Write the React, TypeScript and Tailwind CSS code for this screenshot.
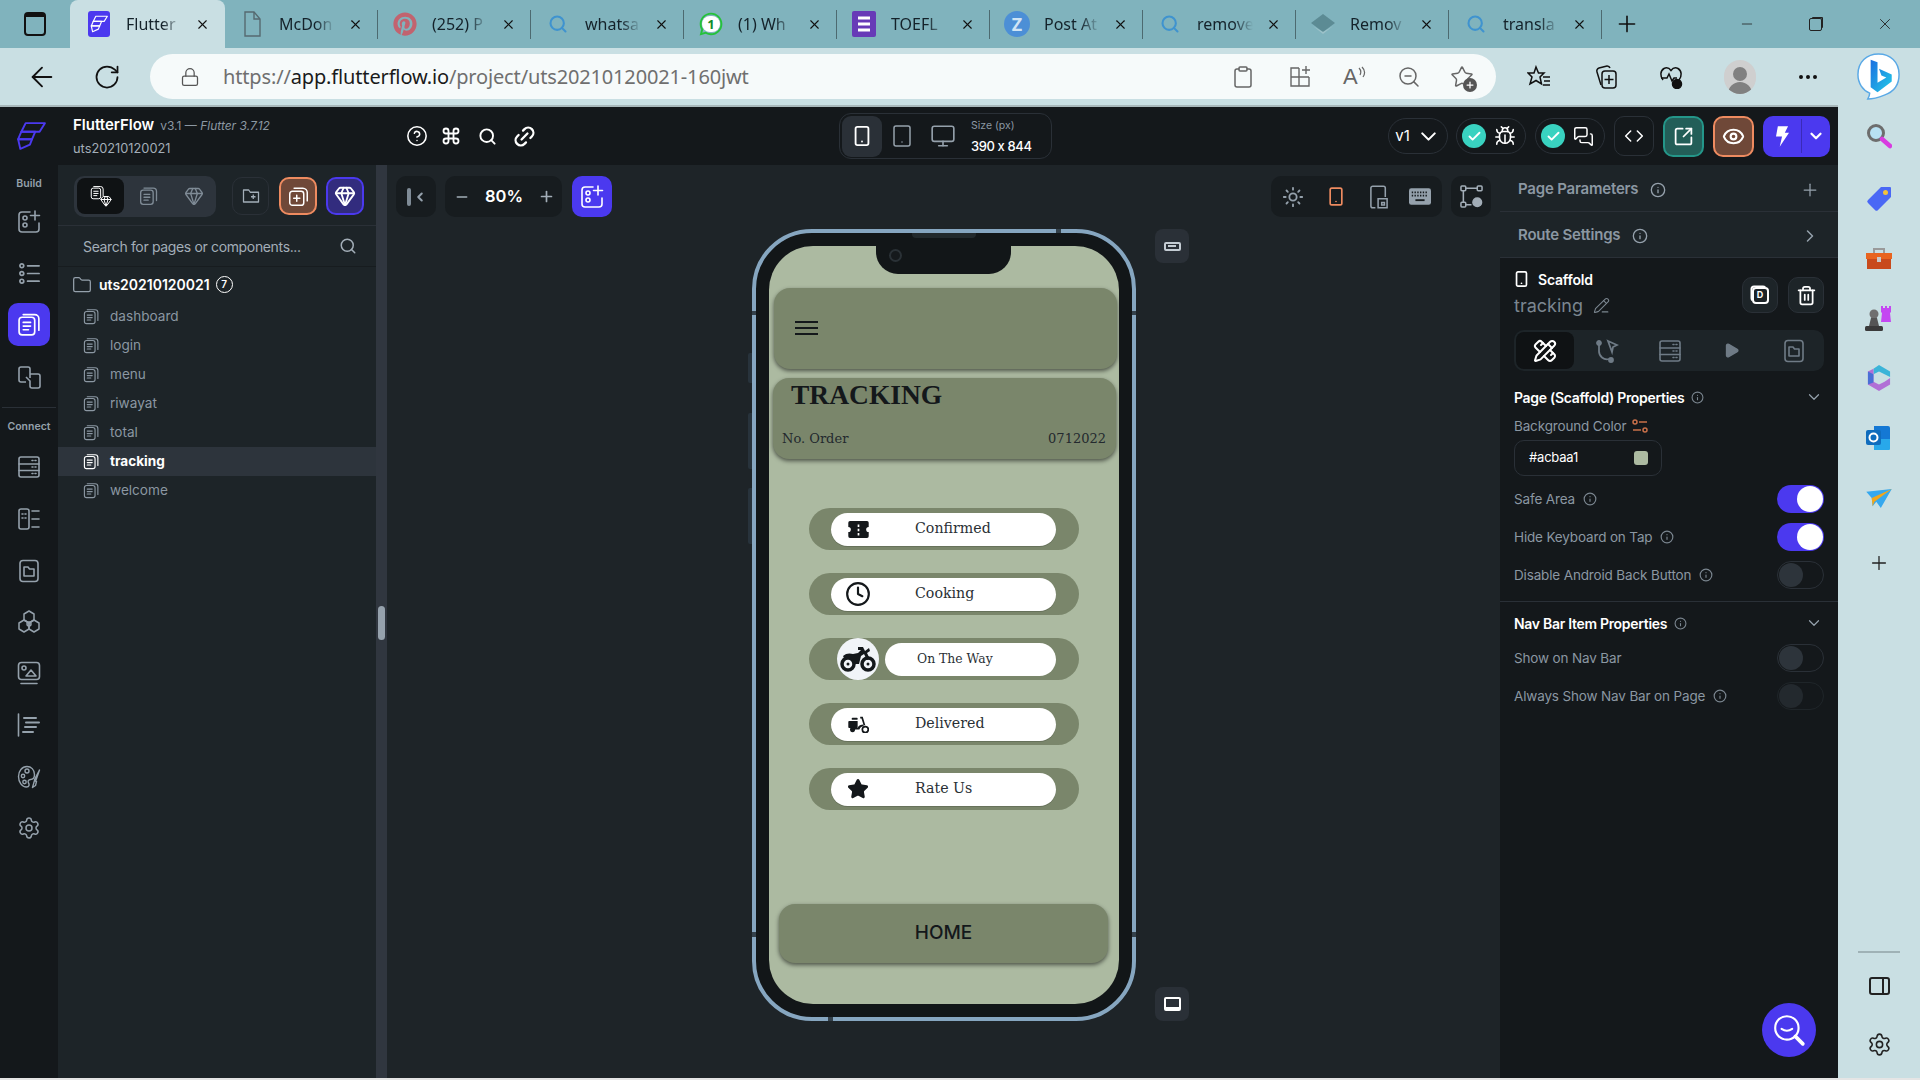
import {
  Bug,
  ChevronDown,
  ChevronRight,
  CircleHelp,
  Clock,
  Code,
  Command,
  Eye,
  Gem,
  Info,
  Link2,
  Minus,
  Monitor,
  MoreHorizontal,
  PencilLine,
  PencilRuler,
  Play,
  Plus,
  RotateCw,
  ArrowLeft,
  Search,
  Settings,
  Smartphone,
  SquareArrowOutUpRight,
  Star,
  Sun,
  Tablet,
  Trash2,
  X,
  Check,
  MessagesSquare,
  Folder,
  Lock,
  Clipboard,
  ZoomOut,
} from 'lucide-react';
import { FaPinterest, FaWhatsapp } from 'react-icons/fa';
import type { ReactNode } from 'react';

const tabs = [
  { title: 'Flutter', icon: 'ff', active: true },
  { title: 'McDon', icon: 'doc' },
  { title: '(252) P', icon: 'pin' },
  { title: 'whatsa', icon: 'search' },
  { title: '(1) Wh', icon: 'wa' },
  { title: 'TOEFL', icon: 'form' },
  { title: 'Post At', icon: 'z' },
  { title: 'remove', icon: 'search' },
  { title: 'Remov', icon: 'diamond' },
  { title: 'transla', icon: 'search' },
];

const pages = ['dashboard', 'login', 'menu', 'riwayat', 'total', 'tracking', 'welcome'];

function FlutterFlowMark({ className }: { className?: string }) {
  return (
    <svg viewBox="0 0 28 28" fill="none" stroke="currentColor" strokeWidth="1.800" strokeLinejoin="round" className={className}>
      <path d="M9 2h18l-5 8H5z" />
      <path d="M5 10h13l-3 7H2z" />
      <path d="M2 17h13l-2 5-9 4z" />
    </svg>
  );
}

function PageStack({ className }: { className?: string }) {
  return (
    <svg viewBox="0 0 24 24" fill="none" stroke="currentColor" strokeWidth="1.6" className={className}>
      <rect x="2" y="5" width="15" height="17" rx="3" />
      <path d="M6 2.500h11a4 4 0 0 1 4 4v11M6 10h7M6 13.500h7M6 17h5" strokeLinecap="round" />
    </svg>
  );
}

function AddWidget({ className }: { className?: string }) {
  return (
    <svg viewBox="0 0 24 24" fill="none" stroke="currentColor" strokeWidth="1.6" strokeLinecap="round" className={className}>
      <path d="M13 2H5a3 3 0 0 0-3 3v14a3 3 0 0 0 3 3h14a3 3 0 0 0 3-3v-6" />
      <circle cx="8" cy="8" r="2" />
      <circle cx="8" cy="15" r="2" />
      <path d="M18 1v9M13.500 5.500h9" />
    </svg>
  );
}

function TreeList({ className }: { className?: string }) {
  return (
    <svg viewBox="0 0 24 24" fill="none" stroke="currentColor" strokeWidth="1.8" strokeLinecap="round" className={className}>
      <circle cx="4" cy="4" r="2" />
      <circle cx="4" cy="12" r="2" />
      <circle cx="4" cy="20" r="2" />
      <path d="M10 4h12M10 12h12M10 20h12" />
    </svg>
  );
}

function Swap({ className }: { className?: string }) {
  return (
    <svg viewBox="0 0 24 24" fill="none" stroke="currentColor" strokeWidth="1.6" className={className}>
      <path d="M13 13V4a2 2 0 0 0-2-2H4a2 2 0 0 0-2 2v11a2 2 0 0 0 2 2h5" />
      <path d="M13 9h8a2 2 0 0 1 2 2v10a2 2 0 0 1-2 2h-6a2 2 0 0 1-2-2v-5L9 12" />
    </svg>
  );
}

function Server({ className }: { className?: string }) {
  return (
    <svg viewBox="0 0 24 24" fill="none" stroke="currentColor" strokeWidth="1.6" strokeLinecap="round" className={className}>
      <rect x="2" y="2" width="20" height="20" rx="2" />
      <path d="M2 9h20M2 15.500h20M15 5.500h1M18 5.500h1M15 12h1M18 12h1M15 18.500h1M18 18.500h1" />
    </svg>
  );
}

function TableList({ className }: { className?: string }) {
  return (
    <svg viewBox="0 0 24 24" fill="none" stroke="currentColor" strokeWidth="1.6" strokeLinecap="round" className={className}>
      <rect x="2" y="2" width="10" height="20" rx="2" />
      <path d="M5 7h1M8 7h1M5 11h1M8 11h1M15 4h7M15 12h7M15 20h7" />
    </svg>
  );
}

function PhoneFolder({ className }: { className?: string }) {
  return (
    <svg viewBox="0 0 24 24" fill="none" stroke="currentColor" strokeWidth="1.6" strokeLinejoin="round" className={className}>
      <rect x="3" y="1.500" width="18" height="21" rx="3" />
      <path d="M7 8h4l1.500 2H17v7H7z" />
    </svg>
  );
}

function Cluster({ className }: { className?: string }) {
  return (
    <svg viewBox="0 0 24 24" fill="none" stroke="currentColor" strokeWidth="1.5" strokeLinejoin="round" className={className}>
      <path d="M12 1l5 3v6l-5 3-5-3V4z" />
      <path d="M7 10l5 3v6l-5 3-5-3v-6z" />
      <path d="M17 10l5 3v6l-5 3-5-3v-6z" />
      <circle cx="12" cy="14" r="2" />
    </svg>
  );
}

function ImageTray({ className }: { className?: string }) {
  return (
    <svg viewBox="0 0 24 24" fill="none" stroke="currentColor" strokeWidth="1.6" strokeLinejoin="round" className={className}>
      <rect x="1.500" y="1.500" width="21" height="17" rx="3" />
      <circle cx="7" cy="7" r="2" />
      <path d="M9 15l5-6 5 6zM4 22.500h16" strokeLinecap="round" />
    </svg>
  );
}

function StoryList({ className }: { className?: string }) {
  return (
    <svg viewBox="0 0 24 24" fill="none" stroke="currentColor" strokeWidth="1.6" strokeLinecap="round" className={className}>
      <path d="M1.500 1v22" />
      <path d="M7 5h12M9 9.500h13M8 14h11M6 19h10" strokeWidth="2" />
    </svg>
  );
}

function Palette({ className }: { className?: string }) {
  return (
    <svg viewBox="0 0 24 24" fill="none" stroke="currentColor" strokeWidth="1.4" strokeLinejoin="round" className={className}>
      <path d="M10 1.500C5 1.500 1.500 6 1.500 11.500S5 22 9.500 22c3 0 3-2.500 2-4s0-3.500 2-3.500c2.500 0 4-1.500 4-5 0-5-3.500-8-7.500-8z" />
      <circle cx="10" cy="6" r="2" />
      <circle cx="6" cy="11" r="1.700" />
      <circle cx="7.500" cy="17" r="1.700" />
      <path d="M22.500 5l-3.500 10-1.500-.5zM17.500 15.500l2 1-1 4-3 2z" />
    </svg>
  );
}

function FolderPlus({ className }: { className?: string }) {
  return (
    <svg viewBox="0 0 24 24" fill="none" stroke="currentColor" strokeWidth="1.7" strokeLinejoin="round" className={className}>
      <path d="M2 4h7l2 3h11v13H2z" />
      <path d="M15 10v6M12 13h6" />
    </svg>
  );
}

function PagePlus({ className }: { className?: string }) {
  return (
    <svg viewBox="0 0 24 24" fill="none" stroke="currentColor" strokeWidth="1.7" strokeLinecap="round" className={className}>
      <rect x="2" y="6" width="16" height="16" rx="3" />
      <path d="M7 2.500h10a5 5 0 0 1 5 5V17M10 10.500v7M6.500 14h7" />
    </svg>
  );
}

function Flow({ className }: { className?: string }) {
  return (
    <svg viewBox="0 0 24 24" fill="none" stroke="currentColor" strokeWidth="1.6" className={className}>
      <rect x="1" y="1" width="5" height="5" rx="1" />
      <rect x="18" y="1" width="5" height="5" rx="1" />
      <rect x="1" y="18" width="5" height="5" rx="1" />
      <path d="M6 3.500h12M3.500 6v12M6 20.500h6" />
      <circle cx="18" cy="18" r="4.500" fill="currentColor" />
    </svg>
  );
}

function TabletSplit({ className }: { className?: string }) {
  return (
    <svg viewBox="0 0 20 26" fill="none" stroke="currentColor" strokeWidth="1.700" className={className}>
      <path d="M6 25H3a2 2 0 0 1-2-2V3a2 2 0 0 1 2-2h12a2 2 0 0 1 2 2v10" />
      <path d="M9 15h10v10H9zM13 19h3v3h-3z" />
    </svg>
  );
}

function KeyboardSolid({ className }: { className?: string }) {
  return (
    <svg viewBox="0 0 24 18" className={className}>
      <rect width="24" height="18" rx="2.500" fill="currentColor" />
      <path d="M3 4.500h18M3 8h18" stroke="#171c1f" strokeWidth="1.800" strokeDasharray="1.500 1.500" />
      <path d="M7 13h10" stroke="#171c1f" strokeWidth="2" />
    </svg>
  );
}

function Bolt({ className }: { className?: string }) {
  return (
    <svg viewBox="0 0 14 22" fill="white" className={className}>
      <path d="M2 0h11L9.500 7H14L4 22l2.500-11H0z" />
    </svg>
  );
}

function Ticket({ className }: { className?: string }) {
  return (
    <svg viewBox="0 0 24 20" className={className}>
      <path
        fill="currentColor"
        fillRule="evenodd"
        d="M2 0h20a2 2 0 0 1 2 2v5a3 3 0 0 0 0 6v5a2 2 0 0 1-2 2H2a2 2 0 0 1-2-2v-5a3 3 0 0 0 0-6V2a2 2 0 0 1 2-2zm9 4v3h2V4zm0 5v3h2V9zm0 5v3h2v-3z"
      />
    </svg>
  );
}

function Scooter({ className }: { className?: string }) {
  return (
    <svg viewBox="0 0 24 20" fill="currentColor" className={className}>
      <rect x="4" y="2" width="7" height="2.500" rx="1" />
      <path d="M1 6h10v8H1a1 1 0 0 1-1-1V7a1 1 0 0 1 1-1z" />
      <path d="M14 1h3l3 10h-2L15.500 3H14z" />
      <path d="M11 14c1-3 4-4 7-4v2c-2 0-4 1-5 4H5v-2z" />
      <circle cx="5" cy="16" r="3" />
      <circle cx="20" cy="16" r="3.500" fill="none" stroke="currentColor" strokeWidth="2" />
    </svg>
  );
}

function Motorbike({ className }: { className?: string }) {
  return (
    <svg viewBox="0 0 36 26" className={className}>
      <g fill="none" stroke="#14181b" strokeWidth="3.500">
        <circle cx="8" cy="18" r="6" />
        <circle cx="28" cy="18" r="6" />
      </g>
      <circle cx="8" cy="18" r="1.500" fill="#14181b" />
      <circle cx="28" cy="18" r="1.500" fill="#14181b" />
      <path fill="#14181b" d="M3 10c3-3 7-3 10-2l5-1 3-3h-3V1h5l2 4 4-3 1 3-3 2 3 6-3 1-3-6-3 2-2 8h-6c0-4-4-7-9-6z" />
    </svg>
  );
}

function TabIcon({ kind }: { kind: string }) {
  if (kind === 'ff')
    return (
      <div className="flex h-[26px] w-[22px] items-center justify-center rounded-[3px] bg-[#4b39ef] text-white">
        <FlutterFlowMark className="h-[20px] w-[18px]" />
      </div>
    );
  if (kind === 'doc')
    return (
      <svg viewBox="0 0 20 26" fill="none" stroke="#566a70" strokeWidth="1.400" className="h-[26px] w-[20px]">
        <path d="M3 1h9l6 7v17H3z" />
        <path d="M12 1v7h6" />
      </svg>
    );
  if (kind === 'pin') return <FaPinterest className="h-[24px] w-[24px] text-[#c2636f]" />;
  if (kind === 'wa')
    return (
      <div className="relative flex h-[26px] w-[24px] items-center justify-center">
        <FaWhatsapp className="h-[26px] w-[24px] text-[#25c23a]" />
        <span className="absolute inset-0 flex items-center justify-center font-['Noto_Sans',sans-serif] text-[13px] font-bold text-[#128c2a]">
          <span className="rounded-full bg-white px-[5px] leading-[16px]">1</span>
        </span>
      </div>
    );
  if (kind === 'form')
    return (
      <svg viewBox="0 0 24 26" className="h-[26px] w-[24px]">
        <rect width="24" height="26" rx="2" fill="#673ab7" />
        <path d="M6 7h12M6 13h12M6 19h12" stroke="#fff" strokeWidth="3" />
      </svg>
    );
  if (kind === 'z')
    return (
      <div className="flex h-[26px] w-[26px] items-center justify-center rounded-full bg-[#4c8fd6] font-['Noto_Sans',sans-serif] text-[18px] font-bold text-[#cfe4f5]">
        Z
      </div>
    );
  if (kind === 'diamond')
    return (
      <svg viewBox="0 0 26 20" className="h-[20px] w-[26px]">
        <path d="M13 0l12 9-12 9L1 9z" fill="#5c8b94" />
        <path d="M3 12l10 8 10-8-10 6z" fill="#9dc2c9" />
      </svg>
    );
  return <Search className="h-[20px] w-[20px] text-[#3f93cf]" strokeWidth={2.500} />;
}

function Tab({ title, icon, active }: { title: string; icon: string; active?: boolean }) {
  return active ? (
    <div className="flex h-12 w-[155px] items-center rounded-t-[8px] bg-[#c9dfe3]">
      <div className="ml-[18px] flex w-[22px] justify-center">
        <TabIcon kind={icon} />
      </div>
      <span className="ml-[16px] w-[56px] text-[16px] whitespace-nowrap text-[#14222a] [mask-image:linear-gradient(90deg,black_65%,transparent)]">
        {title}
      </span>
      <X className="ml-[13px] h-[15px] w-[15px] text-[#111]" strokeWidth={1.800} />
    </div>
  ) : (
    <div className="flex h-12 w-[153px] items-center">
      <div className="ml-[12px] flex w-[30px] justify-center">
        <TabIcon kind={icon} />
      </div>
      <span className="ml-[12px] w-[56px] text-[16px] whitespace-nowrap text-[#14222a] [mask-image:linear-gradient(90deg,black_65%,transparent)]">
        {title}
      </span>
      <X className="ml-[13px] h-[15px] w-[15px] text-[#111]" strokeWidth={1.800} />
      <div className="ml-auto h-[29px] w-px bg-[#4d6a70]" />
    </div>
  );
}

function BingLogo() {
  return (
    <svg viewBox="0 0 44 48" className="h-[47px] w-[45px]">
      <defs>
        <linearGradient id="bingGrad" x1="0" y1="0" x2="1" y2="1">
          <stop offset="0" stopColor="#1b6fe0" />
          <stop offset="1" stopColor="#22cbe8" />
        </linearGradient>
      </defs>
      <path
        d="M22 1c12 0 21 8 21 21 0 11-6 18-15 21-5 2-12 4-17 4 1-2 2-4 2-6C6 38 1 31 1 22 1 9 10 1 22 1z"
        fill="#fff"
        stroke="#5aa9e6"
        strokeWidth="1.500"
      />
      <path d="M14 7l7 2.500v21l9-5.500-5-2-2.500-7 13 6v7L21 40l-7-5z" fill="url(#bingGrad)" />
    </svg>
  );
}

function RailIcon({ className, children }: { className: string; children: ReactNode }) {
  return <div className={`flex h-[28px] items-center justify-center text-[#95a1ac] ${className}`}>{children}</div>;
}

function Toggle({ on, dim }: { on?: boolean; dim?: boolean }) {
  if (on)
    return (
      <div className="flex h-[28px] w-[47px] items-center justify-end rounded-full bg-[#4b39ef] pr-[1px]">
        <div className="h-[26px] w-[26px] rounded-full bg-white" />
      </div>
    );
  return (
    <div className={`flex h-[28px] w-[47px] items-center rounded-full border ${dim ? 'border-[#1f2529]' : 'border-[#2a3037]'} pl-[1px]`}>
      <div className={`h-[24px] w-[24px] rounded-full ${dim ? 'bg-[#23292e]' : 'bg-[#2d343b]'}`} />
    </div>
  );
}

function PropRow({ label, className, children }: { label: string; className: string; children: ReactNode }) {
  return (
    <div className={`flex h-[28px] items-center ${className}`}>
      <span className="text-[13.5px] tracking-[-0.15px] text-[#8b97a2]">{label}</span>
      <Info className="ml-[8px] h-[14px] w-[14px] text-[#7b8690]" />
      <div className="ml-auto">{children}</div>
    </div>
  );
}

function StatusRow({ icon, label }: { icon: ReactNode; label: string }) {
  return (
    <div className="ml-[40px] flex h-[42px] w-[270px] items-center rounded-[21px] bg-[#7a866b] pl-[22px]">
      <div className="flex h-[33px] w-[225px] items-center rounded-[17px] bg-white text-[#14181b] shadow-[0_1px_0_rgba(0,0,0,0.15)]">
        <div className="flex w-[54px] justify-center">{icon}</div>
        <span className="ml-[30px] text-[14.2px] text-[#2a3035]">{label}</span>
      </div>
    </div>
  );
}

function SideColorIcon({ children, className }: { children: ReactNode; className: string }) {
  return <div className={`flex h-[26px] w-full items-center justify-center ${className}`}>{children}</div>;
}

export default function App() {
  return (
    <div className="flex h-[1080px] w-[1920px] flex-col overflow-hidden bg-[#e5e5e5] font-[Inter,sans-serif]">
      {/* tab strip */}
      <div className="flex h-12 shrink-0 bg-[#80b3bd] font-['Noto_Sans',sans-serif]">
        <div className="flex w-[70px] items-center justify-center">
          <div className="h-[24px] w-[22px] rounded-[4px] border-2 border-t-[5px] border-[#111]" />
        </div>
        {tabs.map((tab, i) => (
          <Tab key={i} title={tab.title} icon={tab.icon} active={tab.active} />
        ))}
        <div className="flex w-[50px] items-center justify-center">
          <Plus className="h-[26px] w-[26px] text-[#111]" strokeWidth={1.500} />
        </div>
        <div className="ml-auto flex">
          <div className="flex w-[69px] items-center justify-center">
            <Minus className="h-[16px] w-[16px] text-[#222]" strokeWidth={1.200} />
          </div>
          <div className="flex w-[69px] items-center justify-center">
            <div className="h-[13px] w-[13px] rounded-[2px] border border-[#222] shadow-[2px_-2px_0_-1px_#222]" />
          </div>
          <div className="flex w-[70px] items-center justify-center">
            <X className="h-[18px] w-[18px] text-[#222]" strokeWidth={1.200} />
          </div>
        </div>
      </div>

      {/* address bar */}
      <div className="flex h-[57px] shrink-0 items-center bg-[#c9dfe3] pl-[26px]">
        <ArrowLeft className="h-[32px] w-[32px] text-[#111]" strokeWidth={1.400} />
        <RotateCw className="ml-[35px] h-[28px] w-[28px] text-[#111]" strokeWidth={1.500} />
        <div className="ml-[29px] flex h-[45px] w-[1346px] items-center rounded-full bg-[#f6fafa] pl-[30px] font-['Noto_Sans',sans-serif]">
          <Lock className="h-[22px] w-[20px] text-[#555]" strokeWidth={1.500} />
          <span className="ml-[23px] text-[20px] tracking-[-0.15px] whitespace-nowrap text-[#6f6f6f]">
            https://<span className="text-[#1a1a1a]">app.flutterflow.io</span>/project/uts20210120021-160jwt
          </span>
          <div className="ml-auto flex items-center pr-[22px] text-[#666]">
            <Clipboard className="h-[24px] w-[24px]" strokeWidth={1.500} />
            <svg viewBox="0 0 24 24" fill="none" stroke="currentColor" strokeWidth="1.400" className="ml-[33px] h-[24px] w-[24px]">
              <path d="M11 3H3v18h18v-9M3 12h18M11 3v18M18 1v8M14 5h8" />
            </svg>
            <div className="ml-[31px] flex h-[24px] w-[24px] items-center">
              <span className="font-['Liberation_Sans',sans-serif] text-[22px] leading-none">A</span>
              <svg viewBox="0 0 8 14" fill="none" stroke="currentColor" strokeWidth="1.200" className="mb-[8px] h-[14px] w-[8px]">
                <path d="M1 2c2 2 2 5 1 7M4 1c3 3 3 7 1 10" />
              </svg>
            </div>
            <ZoomOut className="ml-[30px] h-[24px] w-[24px]" strokeWidth={1.500} />
            <div className="relative ml-[29px] h-[24px] w-[24px]">
              <Star className="h-[24px] w-[24px]" strokeWidth={1.500} />
              <div className="absolute right-[-3px] bottom-[-3px] flex h-[14px] w-[14px] items-center justify-center rounded-full bg-[#555] text-white">
                <Plus className="h-[10px] w-[10px]" strokeWidth={3} />
              </div>
            </div>
          </div>
        </div>
        <svg viewBox="0 0 24 24" fill="none" stroke="#111" strokeWidth="1.500" className="ml-[31px] h-[24px] w-[24px]">
          <path d="M9 2l2.500 6H17l-4 4 1.500 7-5.500-3.500L3 19l2-7-4-4h6z" />
          <path d="M16 12h7M17 16h6M16 20h7" />
        </svg>
        <svg viewBox="0 0 24 24" fill="none" stroke="#111" strokeWidth="1.500" className="ml-[43px] h-[24px] w-[24px]">
          <path d="M7 20L3 7a3 3 0 0 1 2-4l8-2a3 3 0 0 1 3 2" />
          <rect x="8" y="6" width="14" height="17" rx="3" />
          <path d="M15 10v9M10.500 14.500h9" />
        </svg>
        <svg viewBox="0 0 24 24" fill="none" stroke="#111" strokeWidth="1.500" className="ml-[41px] h-[24px] w-[24px]">
          <path d="M4 15C1 11 1 6 5 3.500c3-1.500 5.500 0 7 2 1.500-2 4-3.500 7-2 4 2.500 4 7.500 1 11.500" />
          <path d="M2 13h6l2-4 3 7 2-3h3" />
          <circle cx="18" cy="19" r="4.500" fill="#111" />
        </svg>
        <div className="ml-[41px] flex h-[34px] w-[32px] items-end justify-center overflow-hidden rounded-full bg-[#cfcfcf]">
          <div className="flex flex-col items-center">
            <div className="h-[14px] w-[14px] rounded-full bg-[#808080]" />
            <div className="mt-[1px] h-[12px] w-[24px] rounded-t-full bg-[#808080]" />
          </div>
        </div>
        <MoreHorizontal className="ml-[40px] h-[24px] w-[24px] text-[#111]" />
        <div className="ml-[36px] flex w-[45px]">
          <BingLogo />
        </div>
      </div>

      <div className="flex min-h-0 flex-1">
        {/* app */}
        <div className="flex w-[1838px] flex-col border-t-2 border-[#a8b8bb] bg-[#14181b] text-white">
          {/* header */}
          <div className="flex h-[58px] shrink-0 items-center">
            <div className="flex w-[60px] justify-center pl-[1px] text-[#4b39ef]">
              <FlutterFlowMark className="h-[32px] w-[30px]" />
            </div>
            <div className="ml-[13px] flex w-[314px] flex-col">
              <div className="flex items-baseline">
                <span className="text-[15px] font-semibold">FlutterFlow</span>
                <span className="ml-[6px] text-[12px] text-[#8b97a2]">
                  v3.1 — <span className="italic">Flutter 3.7.12</span>
                </span>
              </div>
              <span className="mt-[2px] text-[12.8px] text-[#a3aeb8]">uts20210120021</span>
            </div>
            <div className="flex items-center text-white">
              <CircleHelp className="ml-[19px] h-[22px] w-[22px]" strokeWidth={1.700} />
              <Command className="ml-[13px] h-[20px] w-[20px]" strokeWidth={2.200} />
              <Search className="ml-[17px] h-[19px] w-[19px]" strokeWidth={2.400} />
              <Link2 className="ml-[15px] h-[25px] w-[25px] -rotate-45" strokeWidth={2.200} />
            </div>
            <div className="ml-[302px] flex h-[46px] w-[213px] items-center rounded-[12px] border border-[#2a3037] pl-[2px]">
              <div className="flex h-[41px] w-[40px] items-center justify-center rounded-[9px] bg-[#2a3037]">
                <Smartphone className="h-[22px] w-[22px] text-white" strokeWidth={2} />
              </div>
              <Tablet className="ml-[8px] h-[24px] w-[24px] text-[#95a1ac]" strokeWidth={1.500} />
              <Monitor className="ml-[16px] h-[26px] w-[26px] text-[#95a1ac]" strokeWidth={1.500} />
              <div className="ml-[15px] flex flex-col">
                <span className="text-[10.500px] leading-[14px] text-[#8b97a2]">Size (px)</span>
                <span className="mt-[5px] text-[13px] leading-[16px] font-medium tracking-[-0.4px]">390 x 844</span>
              </div>
            </div>
            <div className="ml-[336px] flex h-[36px] w-[60px] items-center justify-center gap-[6px] rounded-full border border-[#2a3037] text-[15px]">
              v1
              <ChevronDown className="h-[25px] w-[25px]" strokeWidth={2} />
            </div>
            <div className="ml-[8px] flex h-[36px] w-[70px] items-center rounded-full border border-[#2a3037] pl-[5px]">
              <div className="flex h-[24px] w-[24px] items-center justify-center rounded-full bg-[#39d2c0]">
                <Check className="h-[15px] w-[15px] text-white" strokeWidth={3} />
              </div>
              <Bug className="ml-[8px] h-[22px] w-[22px]" strokeWidth={1.700} />
            </div>
            <div className="ml-[9px] flex h-[36px] w-[70px] items-center rounded-full border border-[#2a3037] pl-[5px]">
              <div className="flex h-[24px] w-[24px] items-center justify-center rounded-full bg-[#39d2c0]">
                <Check className="h-[15px] w-[15px] text-white" strokeWidth={3} />
              </div>
              <MessagesSquare className="ml-[8px] h-[21px] w-[21px]" strokeWidth={1.700} />
            </div>
            <div className="ml-[9px] flex h-[40px] w-[40px] items-center justify-center rounded-[10px] border border-[#2a3037]">
              <Code className="h-[20px] w-[20px]" strokeWidth={1.800} />
            </div>
            <div className="ml-[9px] flex h-[41px] w-[41px] items-center justify-center rounded-[10px] border-2 border-[#249689] bg-[#235e58]">
              <SquareArrowOutUpRight className="h-[21px] w-[21px]" strokeWidth={2} />
            </div>
            <div className="ml-[9px] flex h-[41px] w-[41px] items-center justify-center rounded-[10px] border-2 border-[#ee8b60] bg-[#6f4838]">
              <Eye className="h-[23px] w-[23px]" strokeWidth={2.200} />
            </div>
            <div className="ml-[9px] flex h-[41px] w-[67px] items-center rounded-[10px] bg-[#4b39ef]">
              <div className="flex h-[34px] w-[39px] items-center justify-center border-r border-[#3a2ab8]">
                <Bolt className="h-[21px] w-[13px]" />
              </div>
              <ChevronDown className="ml-[5px] h-[18px] w-[18px]" strokeWidth={3} />
            </div>
          </div>

          <div className="flex min-h-0 flex-1">
            {/* rail */}
            <div className="flex w-[58px] shrink-0 flex-col items-center">
              <span className="mt-[12px] h-[14px] text-[10.500px] leading-[14px] font-semibold text-[#95a1ac]">Build</span>
              <RailIcon className="mt-[17px]">
                <AddWidget className="h-[24px] w-[24px]" />
              </RailIcon>
              <RailIcon className="mt-[23px]">
                <TreeList className="h-[23px] w-[23px]" />
              </RailIcon>
              <div className="mt-[16px] flex h-[43px] w-[42px] items-center justify-center rounded-[10px] bg-[#4b39ef] text-white">
                <PageStack className="h-[25px] w-[25px]" />
              </div>
              <RailIcon className="mt-[17px]">
                <Swap className="h-[24px] w-[24px]" />
              </RailIcon>
              <div className="mt-[16px] h-px w-[54px] bg-[#2a3037]" />
              <span className="mt-[12px] h-[14px] text-[10.500px] leading-[14px] font-semibold text-[#95a1ac]">Connect</span>
              <RailIcon className="mt-[19px]">
                <Server className="h-[24px] w-[24px]" />
              </RailIcon>
              <RailIcon className="mt-[24px]">
                <TableList className="h-[24px] w-[24px]" />
              </RailIcon>
              <RailIcon className="mt-[24px]">
                <PhoneFolder className="h-[24px] w-[24px]" />
              </RailIcon>
              <RailIcon className="mt-[23px]">
                <Cluster className="h-[24px] w-[24px]" />
              </RailIcon>
              <RailIcon className="mt-[23px]">
                <ImageTray className="h-[24px] w-[24px]" />
              </RailIcon>
              <RailIcon className="mt-[24px]">
                <StoryList className="h-[24px] w-[24px]" />
              </RailIcon>
              <RailIcon className="mt-[24px]">
                <Palette className="h-[24px] w-[24px]" />
              </RailIcon>
              <RailIcon className="mt-[23px]">
                <Settings className="h-[24px] w-[24px]" strokeWidth={1.500} />
              </RailIcon>
            </div>

            {/* page list */}
            <div className="flex w-[318px] shrink-0 flex-col bg-[#1d2428]">
              <div className="flex h-[61px] shrink-0 items-center border-b border-[#2a3037] pt-[2px] pl-[16px]">
                <div className="flex h-[41px] w-[142px] items-center rounded-[10px] bg-[#2d343c] pl-[3px] text-[#7f8b96]">
                  <div className="flex h-[36px] w-[47px] items-center justify-center rounded-[8px] bg-[#0f1214] text-white">
                    <div className="relative h-[22px] w-[22px]">
                      <PageStack className="h-[15px] w-[15px]" />
                      <Gem className="absolute right-0 bottom-0 h-[12px] w-[12px]" strokeWidth={2} />
                    </div>
                  </div>
                  <PageStack className="ml-[15px] h-[20px] w-[20px]" />
                  <Gem className="ml-[25px] h-[20px] w-[20px]" strokeWidth={1.600} />
                </div>
                <div className="ml-[16px] flex h-[38px] w-[37px] items-center justify-center rounded-[10px] border border-[#2a3037] text-[#a3aeb8]">
                  <FolderPlus className="h-[18px] w-[18px]" />
                </div>
                <div className="ml-[10px] flex h-[38px] w-[38px] items-center justify-center rounded-[10px] border-2 border-[#ee8b60] bg-[#6f4838]">
                  <PagePlus className="h-[21px] w-[21px]" />
                </div>
                <div className="ml-[9px] flex h-[38px] w-[38px] items-center justify-center rounded-[10px] border-2 border-[#4b39ef] bg-[#322c7e]">
                  <Gem className="h-[22px] w-[22px]" strokeWidth={2} />
                </div>
              </div>
              <div className="flex h-[41px] shrink-0 items-center border-b border-[#171c1f] pl-[25px]">
                <span className="text-[14px] tracking-[-0.35px] text-[#a3aeb8]">Search for pages or components...</span>
                <Search className="mr-[19px] ml-auto h-[18px] w-[18px] text-[#a3aeb8]" strokeWidth={2} />
              </div>
              <div className="mt-[2px] flex h-[33px] shrink-0 items-center pb-[2px] pl-[14px]">
                <Folder className="h-[20px] w-[20px] text-[#95a1ac]" strokeWidth={1.500} />
                <span className="ml-[7px] text-[14px] font-semibold">uts20210120021</span>
                <span className="ml-[6px] flex h-[17px] w-[17px] items-center justify-center rounded-full border border-white text-[10px] font-semibold">7</span>
              </div>
              {pages.map((page) =>
                page === 'tracking' ? (
                  <div key={page} className="flex h-[29px] shrink-0 items-center bg-[#2d343c] pl-[25px]">
                    <PageStack className="h-[17px] w-[17px] text-white" />
                    <span className="ml-[10px] text-[13.6px] font-bold text-white">{page}</span>
                  </div>
                ) : (
                  <div key={page} className="flex h-[29px] shrink-0 items-center pl-[25px]">
                    <PageStack className="h-[17px] w-[17px] text-[#8b97a2]" />
                    <span className="ml-[10px] text-[13.6px] text-[#8b97a2]">{page}</span>
                  </div>
                ),
              )}
            </div>
            <div className="w-[11px] shrink-0 bg-[#30363f] px-[2px] pt-[441px]">
              <div className="h-[34px] w-[7px] rounded-full bg-[#95a1ac]" />
            </div>

            {/* canvas */}
            <div className="flex w-[1113px] shrink-0 flex-col bg-[#1e2428]">
              <div className="mt-[11px] flex h-[41px] shrink-0 pl-[9px]">
                <div className="flex w-[40px] items-center justify-center gap-[2px] rounded-[10px] bg-[#171c1f] pl-[2px] text-[#95a1ac]">
                  <div className="h-[18px] w-[4px] rounded-full bg-[#7f8b96]" />
                  <ChevronRight className="h-[14px] w-[14px] rotate-180" strokeWidth={3.500} />
                </div>
                <div className="ml-[9px] flex w-[117px] items-center justify-between rounded-[10px] bg-[#171c1f] pr-[7px] pl-[9px]">
                  <Minus className="h-[16px] w-[16px] text-[#a3aeb8]" strokeWidth={2.400} />
                  <span className="text-[16.500px] font-semibold">80%</span>
                  <Plus className="h-[17px] w-[17px] text-[#a3aeb8]" strokeWidth={2.400} />
                </div>
                <div className="ml-[10px] flex w-[40px] items-center justify-center rounded-[10px] bg-[#4b39ef]">
                  <AddWidget className="h-[24px] w-[24px]" />
                </div>
                <div className="ml-[659px] flex w-[171px] items-center rounded-[10px] bg-[#171c1f] pl-[11px] text-[#95a1ac]">
                  <Sun className="h-[22px] w-[22px]" strokeWidth={2} />
                  <Smartphone className="ml-[22px] h-[27px] w-[20px] text-[#ee8b60]" strokeWidth={2} />
                  <TabletSplit className="ml-[24px] h-[24px] w-[18px]" />
                  <KeyboardSolid className="ml-[21px] h-[17px] w-[22px]" />
                </div>
                <div className="ml-[9px] flex w-[40px] items-center justify-center rounded-[10px] bg-[#171c1f] text-[#a3aeb8]">
                  <Flow className="h-[23px] w-[23px]" />
                </div>
              </div>

              <div className="mt-[12px] flex pl-[365px]">
                {/* phone */}
                <div className="relative h-[792px] w-[384px] shrink-0 rounded-[60px] border-[4px] border-[#86a6c0] bg-[#121618] p-[13px]">
                  <div className="absolute top-[120px] -left-[8px] h-[30px] w-[4px] rounded-l-[2px] bg-[#28333c]" />
                  <div className="absolute top-[180px] -left-[8px] h-[56px] w-[4px] rounded-l-[2px] bg-[#28333c]" />
                  <div className="absolute top-[255px] -left-[8px] h-[56px] w-[4px] rounded-l-[2px] bg-[#28333c]" />
                  <div className="absolute top-[78px] -left-[4px] h-[4px] w-[4px] bg-[#33404a]" />
                  <div className="absolute top-[78px] -right-[4px] h-[4px] w-[4px] bg-[#33404a]" />
                  <div className="absolute bottom-[80px] -left-[4px] h-[5px] w-[4px] bg-[#33404a]" />
                  <div className="absolute -right-[4px] bottom-[80px] h-[5px] w-[4px] bg-[#33404a]" />
                  <div className="absolute -top-[4px] left-[300px] h-[4px] w-[5px] bg-[#33404a]" />
                  <div className="absolute -bottom-[4px] left-[72px] h-[4px] w-[5px] bg-[#33404a]" />
                  <div className="absolute top-0 left-[156px] h-[5px] w-[64px] rounded-b-[4px] bg-[#22292c]" />
                  <div className="relative flex h-[758px] w-[350px] flex-col overflow-hidden rounded-[44px] bg-[#acbaa1]">
                    <div className="absolute top-0 left-[107px] flex h-[28px] w-[135px] rounded-b-[22px] bg-[#121618] pt-[3px] pl-[13px]">
                      <div className="h-[13px] w-[13px] rounded-full border-2 border-[#2a3136] bg-[#15191c]" />
                    </div>
                    <div className="mt-[42px] ml-[5px] flex h-[81px] w-[343px] shrink-0 items-center rounded-[16px] bg-[#7a866b] pb-[2px] pl-[21px] shadow-[0_2px_4px_rgba(0,0,0,0.55)]">
                      <div className="flex h-[14px] w-[23px] flex-col justify-between">
                        <div className="h-[2px] bg-[#14181b]" />
                        <div className="h-[2px] bg-[#14181b]" />
                        <div className="h-[2px] bg-[#14181b]" />
                      </div>
                    </div>
                    <div className="mt-[9px] ml-[4px] h-[81px] w-[343px] shrink-0 rounded-[16px] bg-[#7a866b] pt-[2px] font-['DejaVu_Serif',serif] text-[#14181b] shadow-[0_2px_4px_rgba(0,0,0,0.55)]">
                      <div className="pl-[18px] font-['Liberation_Serif',serif] text-[27.500px] leading-[30px] font-bold text-[#14181b]">TRACKING</div>
                      <div className="mt-[19px] flex items-center justify-between pr-[10px] pl-[9px] text-[13px] leading-[20px] text-[#23292e]">
                        <span>No. Order</span>
                        <span>0712022</span>
                      </div>
                    </div>
                    <div className="mt-[49px] flex flex-col gap-[23px] font-['DejaVu_Serif',serif]">
                      <StatusRow icon={<Ticket className="h-[17px] w-[21px]" />} label="Confirmed" />
                      <StatusRow icon={<Clock className="h-[26px] w-[26px]" strokeWidth={2} />} label="Cooking" />
                      <div className="ml-[40px] flex h-[42px] w-[270px] items-center rounded-[21px] bg-[#7a866b] pl-[28px]">
                        <div className="flex h-[42px] w-[42px] items-center justify-center rounded-full bg-[#f1f4f8]">
                          <Motorbike className="h-[26px] w-[36px]" />
                        </div>
                        <div className="ml-[6px] flex h-[33px] w-[171px] items-center rounded-[17px] bg-white pl-[32px] text-[12.400px] text-[#2a3035]">
                          On The Way
                        </div>
                      </div>
                      <StatusRow icon={<Scooter className="h-[17px] w-[21px]" />} label="Delivered" />
                      <StatusRow icon={<Star className="h-[22px] w-[22px]" fill="currentColor" />} label="Rate Us" />
                    </div>
                    <div className="mt-[94px] ml-[10px] flex h-[59px] w-[329px] shrink-0 items-center justify-center rounded-[16px] bg-[#7a866b] text-[19px] font-medium text-[#14181b] shadow-[0_2px_4px_rgba(0,0,0,0.55)]">
                      HOME
                    </div>
                  </div>
                </div>
                <div className="ml-[19px] flex flex-col justify-between">
                  <div className="flex h-[34px] w-[34px] items-center justify-center rounded-[8px] bg-[#2a3037]">
                    <div className="flex h-[9px] w-[17px] items-center justify-center rounded-[2px] border-2 border-[#c4ccd3]">
                      <div className="h-[2px] w-[8px] bg-[#c4ccd3]" />
                    </div>
                  </div>
                  <div className="flex h-[34px] w-[34px] items-center justify-center rounded-[8px] bg-[#2a3037]">
                    <div className="flex h-[14px] w-[17px] items-end rounded-[2px] border-2 border-white">
                      <div className="h-[2px] w-full bg-white" />
                    </div>
                  </div>
                </div>
              </div>
            </div>

            {/* properties */}
            <div className="flex min-w-0 flex-1 flex-col bg-[#14181b]">
              <div className="flex h-[47px] shrink-0 items-center border-b border-[#2a3037] bg-[#1d2428] px-[18px] pt-[3px]">
                <span className="text-[15px] font-semibold tracking-[-0.2px] text-[#8b97a2]">Page Parameters</span>
                <Info className="ml-[12px] h-[16px] w-[16px] text-[#95a1ac]" />
                <Plus className="ml-auto h-[20px] w-[20px] text-[#95a1ac]" strokeWidth={1.500} />
              </div>
              <div className="flex h-[46px] shrink-0 items-center border-b border-[#2a3037] bg-[#1d2428] px-[18px] pt-[2px]">
                <span className="text-[15px] font-semibold tracking-[-0.2px] text-[#8b97a2]">Route Settings</span>
                <Info className="ml-[12px] h-[16px] w-[16px] text-[#95a1ac]" />
                <ChevronRight className="ml-auto h-[20px] w-[20px] text-[#95a1ac]" strokeWidth={1.800} />
              </div>
              <div className="px-[14px]">
                <div className="mt-[12px] flex items-start">
                  <div className="flex flex-col">
                    <div className="flex h-[18px] items-center">
                      <Smartphone className="ml-[-1px] h-[18px] w-[17px]" strokeWidth={2.400} />
                      <span className="ml-[8px] text-[14px] font-semibold tracking-[-0.2px]">Scaffold</span>
                    </div>
                    <div className="mt-[6px] flex h-[22px] items-center">
                      <span className="text-[18px] text-[#7b8690]">tracking</span>
                      <PencilLine className="ml-[10px] h-[17px] w-[17px] text-[#7b8690]" strokeWidth={1.500} />
                    </div>
                  </div>
                  <div className="mt-[7px] ml-auto flex">
                    <div className="flex h-[36px] w-[36px] items-center justify-center rounded-[10px] border border-[#2a3037] bg-[#1d2428]">
                      <div className="flex h-[17px] w-[17px] items-center justify-center rounded-[4px] border-2 border-white text-[9px] font-bold shadow-[-2px_-2px_0_-0.500px_#fff]">D</div>
                    </div>
                    <div className="ml-[10px] flex h-[36px] w-[36px] items-center justify-center rounded-[10px] border border-[#2a3037] bg-[#1d2428]">
                      <Trash2 className="h-[21px] w-[21px]" strokeWidth={2} />
                    </div>
                  </div>
                </div>

                <div className="mt-[14px] flex h-[41px] items-center rounded-[10px] bg-[#1d2428] pl-[2px] text-[#6f7b86]">
                  <div className="flex h-[37px] w-[58px] items-center justify-center rounded-[8px] bg-[#0f1214] text-white">
                    <PencilRuler className="h-[24px] w-[24px]" strokeWidth={2} />
                  </div>
                  <svg viewBox="0 0 24 24" fill="none" stroke="currentColor" strokeWidth="1.800" className="ml-[21px] h-[24px] w-[24px]">
                    <circle cx="4" cy="4" r="2" fill="currentColor" />
                    <circle cx="16" cy="21" r="2" fill="currentColor" />
                    <path d="M4 6v6a8 8 0 0 0 10 8M13 2l9 4-4 2-1 5z" />
                  </svg>
                  <Server className="ml-[39px] h-[24px] w-[24px]" />
                  <Play className="ml-[41px] h-[17px] w-[17px]" fill="currentColor" />
                  <PhoneFolder className="ml-[42px] h-[24px] w-[24px]" />
                </div>

                <div className="mt-[17px] flex h-[18px] items-center">
                  <span className="text-[14px] font-semibold tracking-[-0.3px]">Page (Scaffold) Properties</span>
                  <Info className="ml-[7px] h-[13px] w-[13px] text-[#7b8690]" />
                  <ChevronDown className="mr-[1px] ml-auto h-[18px] w-[18px] text-[#95a1ac]" strokeWidth={1.600} />
                </div>
                <div className="mt-[12px] flex h-[16px] items-center">
                  <span className="text-[13.5px] tracking-[-0.15px] text-[#8b97a2]">Background Color</span>
                  <svg viewBox="0 0 16 14" fill="none" stroke="#c8704a" strokeWidth="1.500" className="ml-[5px] h-[14px] w-[16px]">
                    <circle cx="3" cy="3" r="2" />
                    <path d="M7 3h8M1 11h8" />
                    <circle cx="13" cy="11" r="2" />
                  </svg>
                </div>
                <div className="mt-[6px] flex h-[36px] w-[148px] items-center rounded-[10px] border border-[#2a3037] pr-[13px] pl-[14px]">
                  <span className="text-[13px] tracking-[-0.2px]">#acbaa1</span>
                  <div className="ml-auto h-[14px] w-[14px] rounded-[3px] bg-[#acbaa1]" />
                </div>
                <PropRow label="Safe Area" className="mt-[9px]">
                  <Toggle on />
                </PropRow>
                <PropRow label="Hide Keyboard on Tap" className="mt-[10px]">
                  <Toggle on />
                </PropRow>
                <PropRow label="Disable Android Back Button" className="mt-[10px]">
                  <Toggle />
                </PropRow>
              </div>
              <div className="mt-[12px] h-px bg-[#2a3037]" />
              <div className="px-[14px]">
                <div className="mt-[12px] flex h-[18px] items-center">
                  <span className="text-[14px] font-semibold tracking-[-0.3px]">Nav Bar Item Properties</span>
                  <Info className="ml-[7px] h-[13px] w-[13px] text-[#7b8690]" />
                  <ChevronDown className="mr-[1px] ml-auto h-[18px] w-[18px] text-[#95a1ac]" strokeWidth={1.600} />
                </div>
                <div className="mt-[12px] flex h-[28px] items-center">
                  <span className="text-[13.5px] tracking-[-0.15px] text-[#8b97a2]">Show on Nav Bar</span>
                  <div className="ml-auto">
                    <Toggle />
                  </div>
                </div>
                <PropRow label="Always Show Nav Bar on Page" className="mt-[10px]">
                  <Toggle dim />
                </PropRow>
              </div>
              <div className="mt-auto mr-[22px] mb-[21px] ml-auto flex h-[54px] w-[54px] items-center justify-center rounded-full bg-[#4b39ef] text-white">
                <svg viewBox="0 0 32 32" fill="none" stroke="white" strokeWidth="2" strokeLinecap="round" className="h-[34px] w-[34px]">
                  <circle cx="14" cy="14" r="11" />
                  <path d="M9 15c3 2 7 2 10 0" />
                  <path d="M22 22l7 7" strokeWidth="3.500" />
                </svg>
              </div>
            </div>
          </div>
        </div>

        {/* edge sidebar */}
        <div className="flex w-[82px] flex-col items-center bg-[#c9dfe3]">
          <SideColorIcon className="mt-[18px]">
            <svg viewBox="0 0 26 26" className="h-[26px] w-[26px]">
              <circle cx="10" cy="10" r="7.500" fill="#b8e0f2" stroke="#6d6d6d" strokeWidth="3" />
              <path d="M16 16l8 7" stroke="#d83be0" strokeWidth="4.500" strokeLinecap="round" />
            </svg>
          </SideColorIcon>
          <SideColorIcon className="mt-[37px]">
            <svg viewBox="0 0 26 26" className="h-[26px] w-[26px]">
              <path d="M2 14L15 1h9a1 1 0 0 1 1 1v9L12 24a2 2 0 0 1-3 0l-7-7a2 2 0 0 1 0-3z" fill="#4a68f5" />
              <circle cx="19.500" cy="6.500" r="2.500" fill="#f3c23c" />
            </svg>
          </SideColorIcon>
          <SideColorIcon className="mt-[34px]">
            <svg viewBox="0 0 28 24" className="h-[24px] w-[28px]">
              <path d="M9 6V2h10v4" fill="none" stroke="#9a9a9a" strokeWidth="2" />
              <path d="M1 6h26v6H1z" fill="#e8641f" />
              <path d="M2 12h24v10H2z" fill="#c84a1c" />
              <rect x="12" y="10" width="4" height="5" fill="#c9c9c9" />
            </svg>
          </SideColorIcon>
          <SideColorIcon className="mt-[33px]">
            <svg viewBox="0 0 28 28" className="h-[28px] w-[28px]">
              <circle cx="9" cy="10" r="4.500" fill="#6f6f6f" />
              <path d="M6 14h6l2 8H4z" fill="#555" />
              <rect x="0" y="22" width="18" height="5" rx="1.500" fill="#3a3a3a" />
              <path d="M16 2h2v2h2V2h2v2h2V2h2v6l-1 1 1 9h-10l1-9-1-1z" fill="#c447f2" />
            </svg>
          </SideColorIcon>
          <SideColorIcon className="mt-[34px]">
            <svg viewBox="0 0 26 28" className="h-[26px] w-[24px]">
              <path d="M13 0l12 7v6l-6-3-6-3-6 3V4z" fill="#3bb4d8" />
              <path d="M1 7l6-3v14l6 3 6-3 6-4v7l-12 7-12-7z" fill="#b16fd6" />
              <path d="M1 7l6 3v9l-6 2z" fill="#4a6fd6" />
            </svg>
          </SideColorIcon>
          <SideColorIcon className="mt-[34px]">
            <svg viewBox="0 0 26 26" className="h-[26px] w-[26px]">
              <path d="M8 1h14a2 2 0 0 1 2 2v12H8z" fill="#1478d4" />
              <path d="M8 14h16v10a1 1 0 0 1-1 1H8z" fill="#28a8ea" />
              <rect x="0" y="5" width="15" height="15" rx="2" fill="#0f6cbd" />
              <circle cx="7.500" cy="12.500" r="4" fill="none" stroke="#fff" strokeWidth="2" />
            </svg>
          </SideColorIcon>
          <SideColorIcon className="mt-[35px]">
            <svg viewBox="0 0 28 22" className="h-[20px] w-[26px]">
              <path d="M0 3l28-3-12 21-5-7-4 5-1-9z" fill="#35a8ee" />
              <path d="M6 10L28 0 9 14l-2 5z" fill="#f2a71b" />
            </svg>
          </SideColorIcon>
          <SideColorIcon className="mt-[38px]">
            <Plus className="h-[22px] w-[22px] text-[#222]" strokeWidth={1.400} />
          </SideColorIcon>
          <div className="mt-auto h-[2px] w-[42px] bg-[#9fb2b6]" />
          <div className="mt-[24px] flex h-[18px] w-[21px] justify-end rounded-[3px] border-2 border-[#222]">
            <div className="mr-[4px] h-full w-[2px] bg-[#222]" />
          </div>
          <Settings className="mt-[37px] mb-[21px] h-[25px] w-[25px] text-[#222]" strokeWidth={1.500} />
        </div>
      </div>

      <div className="h-[2px] shrink-0 bg-[#e5e5e5]" />
    </div>
  );
}
